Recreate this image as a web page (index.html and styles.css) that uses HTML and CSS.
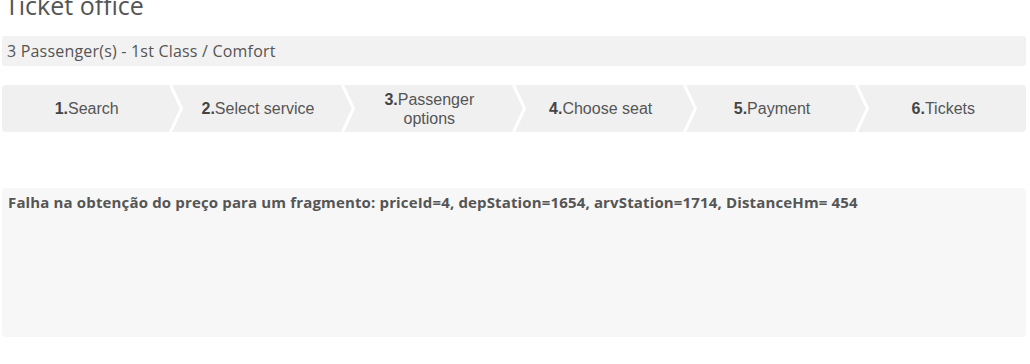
FILE: index.html
```html
<!DOCTYPE html>
<html lang="en">
<head>
<meta charset="utf-8">
<title>Ticket office</title>
<link rel="stylesheet" href="styles.css">
</head>
<body>
<div class="page">
  <h1 class="title">Ticket office</h1>
  <div class="info">3 Passenger(s) - 1st Class / Comfort</div>
  <ol class="steps">
    <li class="step"><span><b>1.</b>Search</span></li>
    <li class="step"><svg class="chev" viewBox="0 0 14 47" preserveAspectRatio="none"><polyline points="1.5,0 12.5,23.5 1.5,47" fill="none" stroke="#fff" stroke-width="3"/></svg><span><b>2.</b>Select service</span></li>
    <li class="step"><svg class="chev" viewBox="0 0 14 47" preserveAspectRatio="none"><polyline points="1.5,0 12.5,23.5 1.5,47" fill="none" stroke="#fff" stroke-width="3"/></svg><span><b>3.</b>Passenger options</span></li>
    <li class="step"><svg class="chev" viewBox="0 0 14 47" preserveAspectRatio="none"><polyline points="1.5,0 12.5,23.5 1.5,47" fill="none" stroke="#fff" stroke-width="3"/></svg><span><b>4.</b>Choose seat</span></li>
    <li class="step"><svg class="chev" viewBox="0 0 14 47" preserveAspectRatio="none"><polyline points="1.5,0 12.5,23.5 1.5,47" fill="none" stroke="#fff" stroke-width="3"/></svg><span><b>5.</b>Payment</span></li>
    <li class="step"><svg class="chev" viewBox="0 0 14 47" preserveAspectRatio="none"><polyline points="1.5,0 12.5,23.5 1.5,47" fill="none" stroke="#fff" stroke-width="3"/></svg><span><b>6.</b>Tickets</span></li>
  </ol>
  <div class="error">Falha na obtenção do preço para um fragmento: priceId=4, depStation=1654, arvStation=1714, DistanceHm= 454</div>
</div>
</body>
</html>
```
FILE: styles.css
```css
* { box-sizing: border-box; }
html, body { margin: 0; padding: 0; background: #fff; }
body { font-family: "Open Sans", "DejaVu Sans", sans-serif; color: #555; }

.page {
  margin: 0 4px 0 2px;
  display: flex;
  flex-direction: column;
}

.title {
  margin: -8px 0 18px 0;
  font-size: 25px;
  line-height: 26px;
  font-weight: 400;
  color: #555;
  padding-left: 3px;
}

.info {
  height: 30px;
  padding: 2px 0 0 5px;
  line-height: 27px;
  background: #f2f2f2;
  border-radius: 3px;
  font-size: 16px;
  letter-spacing: 0.2px;
  color: #555;
}

.steps {
  list-style: none;
  margin: 19px 0 56px 0;
  padding: 0;
  display: flex;
  height: 47px;
  background: #f0f0f0;
  border-radius: 4px;
  overflow: hidden;
}

.step {
  position: relative;
  flex: 1 1 0;
  display: flex;
  align-items: center;
  justify-content: center;
  padding: 0 24px 0 30px;
  text-align: center;
  font-family: "Liberation Sans", Arial, sans-serif;
  font-size: 16px;
  line-height: 19px;
  color: #555;
}
.step:first-child { padding-left: 26px; }
.step b { color: #444; }

.chev {
  position: absolute;
  left: 0;
  top: 0;
  width: 14px;
  height: 100%;
}

.error {
  height: 149px;
  padding: 4px 6px;
  background: #f7f7f7;
  border-radius: 4px;
  font-size: 15px;
  line-height: 20px;
  letter-spacing: 0.15px;
  font-weight: 700;
  color: #555;
}
```
